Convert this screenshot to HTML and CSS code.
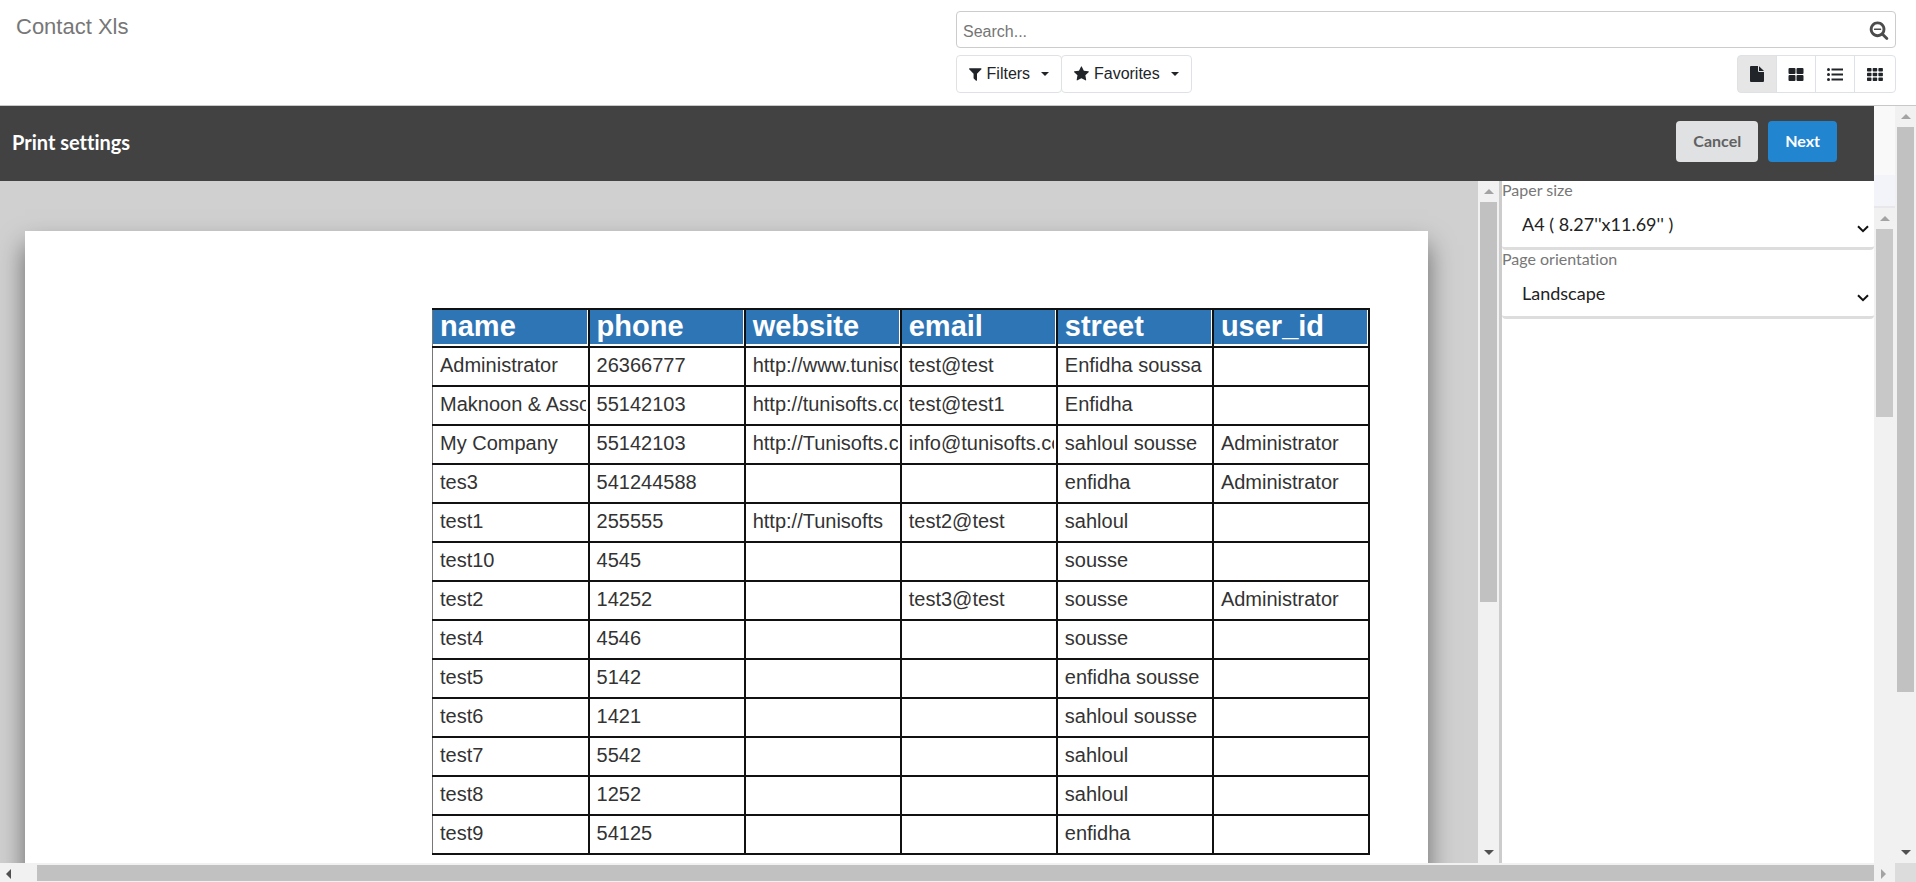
FILE: index.html
```html
<!DOCTYPE html>
<html lang="en">
<head>
<meta charset="utf-8">
<title>Contact Xls</title>
<link rel="stylesheet" href="styles.css">
</head>
<body>
<header class="control-panel">
  <h1 class="page-title">Contact Xls</h1>
  <div class="controls">
    <div class="search">
      <input class="search-input" type="text" placeholder="Search..." aria-label="Search">
      <button class="search-toggle" type="button" aria-label="Search options">
        <svg class="icon-lg" viewBox="0 0 1792 1792"><path d="M1088 800v64q0 13-9.5 22.5t-22.5 9.5h-576q-13 0-22.5-9.5t-9.5-22.5v-64q0-13 9.5-22.5t22.5-9.5h576q13 0 22.5 9.5t9.5 22.5zm128 32q0-185-131.5-316.5t-316.5-131.5-316.5 131.5-131.5 316.5 131.5 316.5 316.5 131.5 316.5-131.5 131.5-316.5zm512 832q0 53-37.5 90.5t-90.5 37.5q-54 0-90-38l-343-342q-179 124-399 124-143 0-273.5-55.5t-225-150-150-225-55.5-273.5 55.5-273.5 150-225 225-150 273.5-55.5 273.5 55.5 225 150 150 225 55.5 273.5q0 220-124 399l343 343q37 37 37 90z"/></svg>
      </button>
    </div>
    <div class="toolbar">
      <div class="button-row">
        <button class="tool" type="button"><svg class="icon" viewBox="192 0 1408 1792"><path d="M1595 295q17 41-14 70l-493 493v742q0 42-39 59-13 5-25 5-27 0-45-19l-256-256q-19-19-19-45v-486l-493-493q-31-29-14-70 17-39 59-39h1280q42 0 59 39z"/></svg>Filters<span class="caret"></span></button>
        <button class="tool" type="button"><svg class="icon" viewBox="64 0 1664 1792"><path d="M1728 647q0 22-26 48l-363 354 86 500q1 7 1 20 0 21-10.5 35.5t-30.5 14.5q-19 0-40-12l-449-236-449 236q-22 12-40 12-21 0-31.5-14.5t-10.5-35.5q0-6 2-20l86-500-364-354q-25-27-25-48 0-37 56-46l502-73 225-455q19-41 49-41t49 41l225 455 502 73q56 9 56 46z"/></svg>Favorites<span class="caret"></span></button>
      </div>
      <div class="view-switch">
        <button class="view active" type="button" aria-label="Report"><svg class="icon" viewBox="0 0 16 16"><path d="M1 1Q1 0 2 0H9V5Q9 6 10 6H15V15Q15 16 14 16H2Q1 16 1 15ZM10 0.2Q10.4 0.4 10.6 0.7L14.3 4.3Q14.6 4.6 14.8 5H10Z"/></svg></button>
        <button class="view" type="button" aria-label="Kanban"><svg class="icon" viewBox="0 0 16 16"><rect x="0.5" y="2" width="7" height="6" rx="1"/><rect x="8.5" y="2" width="7" height="6" rx="1"/><rect x="0.5" y="9" width="7" height="6" rx="1"/><rect x="8.5" y="9" width="7" height="6" rx="1"/></svg></button>
        <button class="view" type="button" aria-label="List"><svg class="icon" viewBox="0 0 16 16"><circle cx="1.5" cy="3.5" r="1.5"/><circle cx="1.5" cy="8.5" r="1.5"/><circle cx="1.5" cy="13.5" r="1.5"/><path d="M4.500 2.500H16V4.500H4.500ZM4.500 7.500H16V9.500H4.500ZM4.500 12.500H16V14.500H4.500Z"/></svg></button>
        <button class="view" type="button" aria-label="Grid"><svg class="icon" viewBox="0 0 16 16"><rect x="0" y="2" width="4.500" height="3.500" rx=".7"/><rect x="5.700" y="2" width="4.500" height="3.500" rx=".7"/><rect x="11.400" y="2" width="4.500" height="3.500" rx=".7"/><rect x="0" y="6.700" width="4.500" height="3.500" rx=".7"/><rect x="5.700" y="6.700" width="4.500" height="3.500" rx=".7"/><rect x="11.400" y="6.700" width="4.500" height="3.500" rx=".7"/><rect x="0" y="11.400" width="4.500" height="3.500" rx=".7"/><rect x="5.700" y="11.400" width="4.500" height="3.500" rx=".7"/><rect x="11.400" y="11.400" width="4.500" height="3.500" rx=".7"/></svg></button>
      </div>
    </div>
  </div>
</header>

<div class="workspace">
  <main class="dialog">
    <div class="dialog-bar">
      <h2 class="dialog-title">Print settings</h2>
      <button class="btn" type="button">Cancel</button>
      <button class="btn primary" type="button">Next</button>
    </div>
    <div class="dialog-body">
      <section class="preview">
        <div class="paper">
          <table class="contacts">
            <thead>
              <tr><th><div>name</div></th><th><div>phone</div></th><th><div>website</div></th><th><div>email</div></th><th><div>street</div></th><th><div>user_id</div></th></tr>
            </thead>
            <tbody>
              <tr><td><div>Administrator</div></td><td><div>26366777</div></td><td><div>http://www.tuniso</div></td><td><div>test@test</div></td><td><div>Enfidha soussa</div></td><td></td></tr>
              <tr><td><div>Maknoon &amp; Asso</div></td><td><div>55142103</div></td><td><div>http://tunisofts.co</div></td><td><div>test@test1</div></td><td><div>Enfidha</div></td><td></td></tr>
              <tr><td><div>My Company</div></td><td><div>55142103</div></td><td><div>http://Tunisofts.c</div></td><td><div>info@tunisofts.co</div></td><td><div>sahloul sousse</div></td><td><div>Administrator</div></td></tr>
              <tr><td><div>tes3</div></td><td><div>541244588</div></td><td></td><td></td><td><div>enfidha</div></td><td><div>Administrator</div></td></tr>
              <tr><td><div>test1</div></td><td><div>255555</div></td><td><div>http://Tunisofts</div></td><td><div>test2@test</div></td><td><div>sahloul</div></td><td></td></tr>
              <tr><td><div>test10</div></td><td><div>4545</div></td><td></td><td></td><td><div>sousse</div></td><td></td></tr>
              <tr><td><div>test2</div></td><td><div>14252</div></td><td></td><td><div>test3@test</div></td><td><div>sousse</div></td><td><div>Administrator</div></td></tr>
              <tr><td><div>test4</div></td><td><div>4546</div></td><td></td><td></td><td><div>sousse</div></td><td></td></tr>
              <tr><td><div>test5</div></td><td><div>5142</div></td><td></td><td></td><td><div>enfidha sousse</div></td><td></td></tr>
              <tr><td><div>test6</div></td><td><div>1421</div></td><td></td><td></td><td><div>sahloul sousse</div></td><td></td></tr>
              <tr><td><div>test7</div></td><td><div>5542</div></td><td></td><td></td><td><div>sahloul</div></td><td></td></tr>
              <tr><td><div>test8</div></td><td><div>1252</div></td><td></td><td></td><td><div>sahloul</div></td><td></td></tr>
              <tr><td><div>test9</div></td><td><div>54125</div></td><td></td><td></td><td><div>enfidha</div></td><td></td></tr>
            </tbody>
          </table>
        </div>
      </section>
      <div class="scroll-y" aria-hidden="true">
        <i class="arrow up off"></i>
        <div class="track"><div class="thumb" style="height:62.500%"></div></div>
        <i class="arrow down"></i>
      </div>
      <aside class="settings">
        <div class="field">
          <label for="paper-size">Paper size</label>
          <div class="select-wrap">
            <select id="paper-size"><option>A4 ( 8.27''x11.69'' )</option></select>
            <svg class="chevron" viewBox="0 0 12 8"><path d="M1 1.200L6 6.200L11 1.200"/></svg>
          </div>
        </div>
        <div class="field">
          <label for="orientation">Page orientation</label>
          <div class="select-wrap">
            <select id="orientation"><option>Landscape</option><option>Portrait</option></select>
            <svg class="chevron" viewBox="0 0 12 8"><path d="M1 1.200L6 6.200L11 1.200"/></svg>
          </div>
        </div>
      </aside>
    </div>
  </main>
  <div class="backdrop" aria-hidden="true">
    <div class="backdrop-top"></div>
    <div class="backdrop-head"></div>
    <div class="scroll-y dim">
      <i class="arrow up off"></i>
      <div class="track"><div class="thumb" style="height:29.600%"></div></div>
    </div>
  </div>
  <div class="scroll-y" aria-hidden="true">
    <i class="arrow up off"></i>
    <div class="track"><div class="thumb" style="height:79%"></div></div>
    <i class="arrow down"></i>
  </div>
</div>

<div class="scroll-row" aria-hidden="true">
  <div class="scroll-x">
    <i class="arrow left"></i>
    <div class="thumb-x"></div>
    <i class="arrow right off"></i>
  </div>
  <div class="corner"></div>
</div>
</body>
</html>
```

FILE: styles.css
```css
* {
  box-sizing: border-box;
}

body {
  margin: 0;
  height: 100vh;
  display: flex;
  flex-direction: column;
  overflow: hidden;
  background: #fff;
  color: #212529;
  font-family: "Liberation Sans", Arial, sans-serif;
  font-size: 16px;
}

button,
input,
select {
  font: inherit;
  color: inherit;
}

/* Control panel */

.control-panel {
  display: flex;
  padding: 11px 20px 12px 16px;
  border-bottom: 1px solid #c8c8c8;
}

.page-title {
  flex: 1;
  margin: 0;
  padding-top: 3px;
  color: #777;
  font-size: 22px;
  font-weight: 400;
  line-height: 26px;
}

.controls {
  flex: 1;
  display: flex;
  flex-direction: column;
  gap: 7px;
}

.search {
  display: flex;
  align-items: center;
  height: 37px;
  padding: 0 6px;
  border: 1px solid #ccc;
  border-radius: 4px;
}

.search-input {
  flex: 1;
  height: 35px;
  padding: 4px 0 0;
  border: 0;
  outline: 0;
  background: none;
}

.search-input::placeholder {
  color: #757575;
}

.search-toggle {
  display: flex;
  padding: 0;
  border: 0;
  background: none;
  fill: #4c4c4c;
}

.icon {
  height: 16px;
  fill: #212529;
}

.icon-lg {
  width: 20px;
  height: 20px;
}

.toolbar {
  display: flex;
  justify-content: space-between;
}

.button-row,
.view-switch {
  display: flex;
}

.tool {
  display: flex;
  align-items: center;
  gap: 5px;
  height: 38px;
  padding: 0 12px;
  border: 1px solid #dee2e6;
  border-radius: 4px;
  background: #fff;
}

.tool + .tool {
  margin-left: -1px;
}

.caret {
  margin-left: 6px;
  border: 4px solid transparent;
  border-top-color: #212529;
  border-bottom: 0;
}

.view {
  display: flex;
  align-items: center;
  justify-content: center;
  width: 40px;
  height: 38px;
  padding: 0;
  border: 1px solid #dee2e6;
  background: #fff;
}

.view + .view {
  margin-left: -1px;
}

.view:first-child {
  border-radius: 4px 0 0 4px;
}

.view:last-child {
  width: 42px;
  border-radius: 0 4px 4px 0;
}

.view.active {
  background: #e6e6e6;
}

/* Dialog */

.workspace {
  flex: 1;
  display: flex;
  min-height: 0;
}

.dialog {
  flex: 1;
  display: flex;
  flex-direction: column;
  min-width: 0;
  font-family: Lato, sans-serif;
  font-variant-ligatures: none;
}

.dialog-bar {
  display: flex;
  align-items: center;
  gap: 10px;
  padding: 15px 37px 19px 12px;
  background: #424242;
}

.dialog-title {
  flex: 1;
  margin: 0;
  color: #fff;
  font-size: 20px;
  line-height: 24px;
}

.btn {
  height: 41px;
  padding: 0 17px 2px;
  border: 0;
  border-radius: 4px;
  background: #e0e1e2;
  color: #606162;
  font-weight: 700;
}

.btn.primary {
  background: #2185d0;
  color: #fff;
}

.dialog-body {
  flex: 1;
  display: flex;
  min-height: 0;
}

.preview {
  flex: 1;
  min-width: 0;
  padding: 50px 50px 0 25px;
  overflow: hidden;
  background: #d0d0d0;
}

.paper {
  min-height: 900px;
  padding: 77px 58px 0 407px;
  background: #fff;
  box-shadow: 0 14px 24px rgba(0, 0, 0, 0.5);
}

.contacts {
  width: 100%;
  table-layout: fixed;
  border-collapse: collapse;
  font-family: "Liberation Sans", Arial, sans-serif;
  font-size: 20px;
  color: #333;
}

.contacts th,
.contacts td {
  height: 39px;
  padding: 0 2px 0 0;
  border: 2px solid #111;
  text-align: left;
  vertical-align: top;
}

.contacts th {
  height: 38px;
  padding: 0 1px 2px 0;
}

.contacts th:first-child,
.contacts td:first-child {
  border-left: 1px solid #777;
}

.contacts div {
  padding-left: 7px;
  overflow: hidden;
  white-space: nowrap;
  line-height: 34px;
}

.contacts th div {
  padding-bottom: 2px;
  background: #2e75b6;
  color: #fff;
  font-size: 29px;
  line-height: 32px;
}

/* Settings */

.settings {
  width: 375px;
  border-left: 3px solid #ccc;
  background: #fff;
}

.field label {
  display: block;
  color: #777;
  line-height: 18px;
}

.select-wrap {
  position: relative;
}

.field select {
  display: block;
  width: 100%;
  height: 51px;
  padding: 4px 20px 3px;
  appearance: none;
  border: 0;
  border-bottom: 3px solid #ddd;
  border-radius: 4px;
  background: #fff;
  color: #222;
  font-size: 18px;
}

.chevron {
  position: absolute;
  right: 5px;
  top: 26px;
  width: 12px;
  height: 8px;
  fill: none;
  stroke: #111;
  stroke-width: 2;
}

/* Page showing behind the dialog */

.backdrop {
  width: 21px;
  display: flex;
  flex-direction: column;
}

.backdrop-top {
  height: 69px;
  background: #f9f9f9;
}

.backdrop-head {
  height: 33px;
  border-bottom: 2px solid #e8e8ea;
  background: #f3f4f9;
}

.backdrop .scroll-y {
  flex: 1;
}

/* Scroll bars */

.scroll-y {
  display: flex;
  flex-direction: column;
  width: 21px;
  padding: 0 2px;
  background: #f1f1f1;
}

.track {
  flex: 1;
}

.thumb {
  background: #c1c1c1;
}

.dim .thumb {
  background: #c8c8c8;
}

.arrow {
  display: flex;
  align-items: center;
  justify-content: center;
  width: 17px;
  height: 21px;
}

.arrow::before {
  content: "";
  border: 5px solid transparent;
}

.up::before {
  border-top: 0;
  border-bottom-color: #505050;
}

.down::before {
  border-bottom: 0;
  border-top-color: #505050;
}

.left::before {
  border-left: 0;
  border-right-color: #505050;
}

.right::before {
  border-right: 0;
  border-left-color: #a3a3a3;
}

.up.off::before {
  border-bottom-color: #a3a3a3;
}

.scroll-row {
  display: flex;
  height: 19px;
}

.scroll-x {
  flex: 1;
  display: flex;
  padding: 2px 2px 0 0;
  background: #f1f1f1;
}

.scroll-x .arrow {
  height: 17px;
}

.scroll-x .arrow.right {
  width: 19px;
}

.thumb-x {
  flex: 1;
  margin-left: 20px;
  margin-bottom: 1px;
  background: #c1c1c1;
}

.corner {
  width: 21px;
  background: #dcdcdc;
}
```
